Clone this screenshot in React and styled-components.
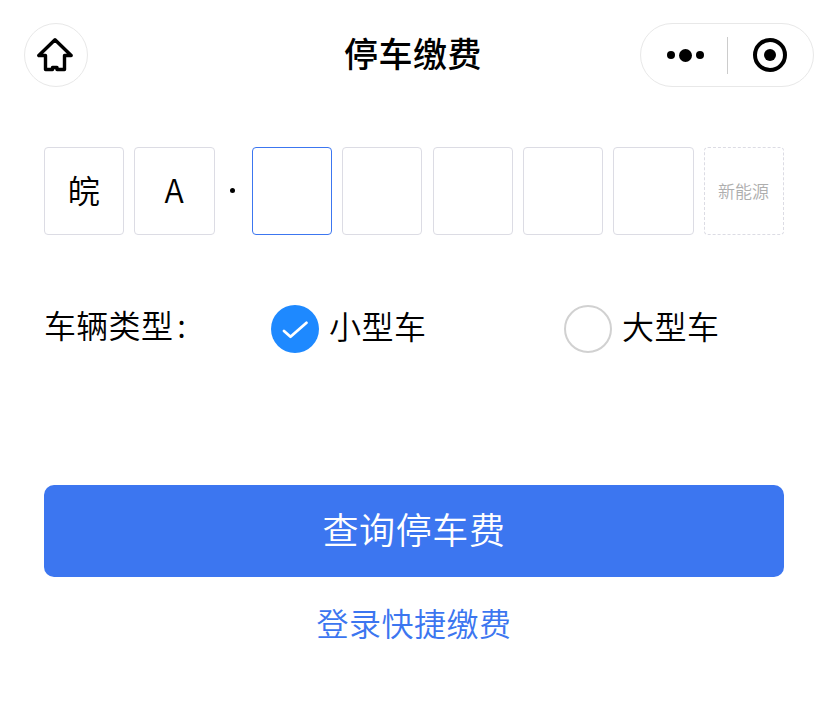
import React from 'react'
import styled, { createGlobalStyle } from 'styled-components'

const GlobalStyle = createGlobalStyle`
    html, body {
        margin: 0;
        padding: 0;
        background: #fff;
    }
    body {
        font-family: "Noto Sans CJK SC", "Noto Sans", sans-serif;
        font-weight: 350;
        color: #000;
    }
`

const plate = ['皖', 'A']
const emptyCells = [0, 1, 2, 3]

const App = () => {
    return (
        <Page>
            <GlobalStyle />
            <NavBar>
                <HomeButton>
                    <svg width="36" height="34" viewBox="0 0 36 34" fill="none" stroke="#000" strokeWidth="3.4" strokeLinejoin="round" strokeLinecap="round">
                        <path d="M18 1.8 L1.8 17.5 L8.5 17.5 L8.5 31.5 L15.5 31.5 L15.5 29.5 L20 29.5 L20 31.5 L27.5 31.5 L27.5 17.5 L34.2 17.5 Z" />
                    </svg>
                </HomeButton>
                <NavTitle>停车缴费</NavTitle>
                <Capsule>
                    <MoreButton>
                        <Dot size={8} />
                        <Dot size={13} />
                        <Dot size={8} />
                    </MoreButton>
                    <CapsuleLine />
                    <CloseButton>
                        <svg width="36" height="36" viewBox="0 0 36 36">
                            <circle cx="18" cy="18" r="15" fill="none" stroke="#000" strokeWidth="4" />
                            <circle cx="18" cy="18" r="6" fill="#000" />
                        </svg>
                    </CloseButton>
                </Capsule>
            </NavBar>

            <PlateRow>
                {plate.map((c) => (
                    <PlateCell key={c}>{c}</PlateCell>
                ))}
                <Separator />
                <PlateCell active />
                {emptyCells.map((i) => (
                    <PlateCell key={i} />
                ))}
                <EnergyCell>新能源</EnergyCell>
            </PlateRow>

            <TypeRow>
                <TypeLabel>车辆类型<Colon>:</Colon></TypeLabel>
                <Option>
                    <RadioOn>
                        <svg width="28" height="22" viewBox="0 0 28 22" fill="none" stroke="#fff" strokeWidth="2.8" strokeLinecap="round" strokeLinejoin="round">
                            <path d="M3 13 L9.5 18.8 L25.5 4.8" />
                        </svg>
                    </RadioOn>
                    <OptionText>小型车</OptionText>
                </Option>
                <Option>
                    <RadioOff />
                    <OptionText>大型车</OptionText>
                </Option>
            </TypeRow>

            <QueryButton>查询停车费</QueryButton>
            <LoginLink>登录快捷缴费</LoginLink>
        </Page>
    )
}

const Page = styled.div`
    width: 828px;
    height: 719px;
    overflow: hidden;
    background: #fff;
    box-sizing: border-box;
    padding-top: 23px;
`

const NavBar = styled.div`
    position: relative;
    display: flex;
    align-items: center;
    justify-content: space-between;
    height: 64px;
    padding: 0 14px 0 24px;
`

const HomeButton = styled.div`
    width: 64px;
    height: 64px;
    box-sizing: border-box;
    border: 1px solid #e8e8e8;
    border-radius: 50%;
    display: flex;
    align-items: center;
    justify-content: center;
    svg {
        margin: -1px 0 0 -2px;
    }
`

const NavTitle = styled.div`
    position: absolute;
    left: 0;
    right: 2px;
    top: -2px;
    line-height: 64px;
    text-align: center;
    font-size: 34px;
    font-weight: 500;
    letter-spacing: 0.5px;
    pointer-events: none;
`

const Capsule = styled.div`
    width: 174px;
    height: 64px;
    box-sizing: border-box;
    border: 1px solid #e8e8e8;
    border-radius: 32px;
    display: flex;
    align-items: center;
`

const MoreButton = styled.div`
    width: 86px;
    padding-left: 2px;
    box-sizing: border-box;
    display: flex;
    align-items: center;
    justify-content: center;
    gap: 4px;
`

const Dot = styled.span`
    width: ${(p) => p.size}px;
    height: ${(p) => p.size}px;
    border-radius: 50%;
    background: #000;
`

const CapsuleLine = styled.div`
    width: 1px;
    height: 37px;
    background: #ccc;
`

const CloseButton = styled.div`
    flex: 1;
    display: flex;
    align-items: center;
    justify-content: center;
    padding-right: 1px;
    svg {
        margin-top: -1px;
    }
`

const PlateRow = styled.div`
    display: flex;
    align-items: stretch;
    gap: 10.1px;
    height: 88px;
    margin: 60px 44px 0;
`

const PlateCell = styled.div`
    flex: 1 1 0;
    box-sizing: border-box;
    border: 1px solid ${(p) => (p.active ? '#3c76f0' : '#dcdce4')};
    border-radius: 4px;
    display: flex;
    align-items: center;
    justify-content: center;
    padding: 0 1px 4px 0;
    font-size: 32px;
    color: #000;
`

const Separator = styled.div`
    flex: 0 0 16.8px;
    display: flex;
    align-items: center;
    justify-content: center;
    padding-right: 2px;
    box-sizing: border-box;
    &::before {
        content: '';
        width: 5px;
        height: 5px;
        border-radius: 50%;
        background: #000;
        margin-top: -2px;
    }
`

const EnergyCell = styled(PlateCell)`
    border: 1px dashed #dcdce4;
    font-size: 17px;
    color: #aeaeae;
    padding: 0 1px 2px 0;
`

const TypeRow = styled.div`
    display: flex;
    align-items: center;
    height: 48px;
    margin: 70px 0 0 45px;
`

const TypeLabel = styled.div`
    flex: none;
    font-size: 32px;
    line-height: 44px;
    margin-top: -10px;
    margin-left: -1px;
    width: 227px;
    letter-spacing: 0.3px;
    white-space: nowrap;
`

const Colon = styled.span`
    margin-left: 4px;
`

const Option = styled.div`
    flex: none;
    display: flex;
    align-items: center;
    gap: 10px;
    width: 293px;
`

const RadioOn = styled.div`
    width: 48px;
    height: 48px;
    border-radius: 50%;
    background: #1e89ff;
    display: flex;
    align-items: center;
    justify-content: center;
    box-sizing: border-box;
`

const RadioOff = styled.div`
    width: 48px;
    height: 48px;
    box-sizing: border-box;
    border-radius: 50%;
    border: 2px solid #d1d1d1;
    background: #fff;
`

const OptionText = styled.span`
    font-size: 32px;
    line-height: 44px;
    margin-top: -8px;
    letter-spacing: 0.5px;
`

const QueryButton = styled.div`
    height: 92px;
    margin: 132px 44px 0;
    border-radius: 10px;
    background: #3c76f0;
    color: #fff;
    font-size: 36px;
    line-height: 86px;
    letter-spacing: 0.6px;
    text-align: center;
`

const LoginLink = styled.div`
    margin-top: 22px;
    font-size: 32px;
    line-height: 46px;
    letter-spacing: 0.5px;
    text-align: center;
    color: #3c76f0;
`

export default App
